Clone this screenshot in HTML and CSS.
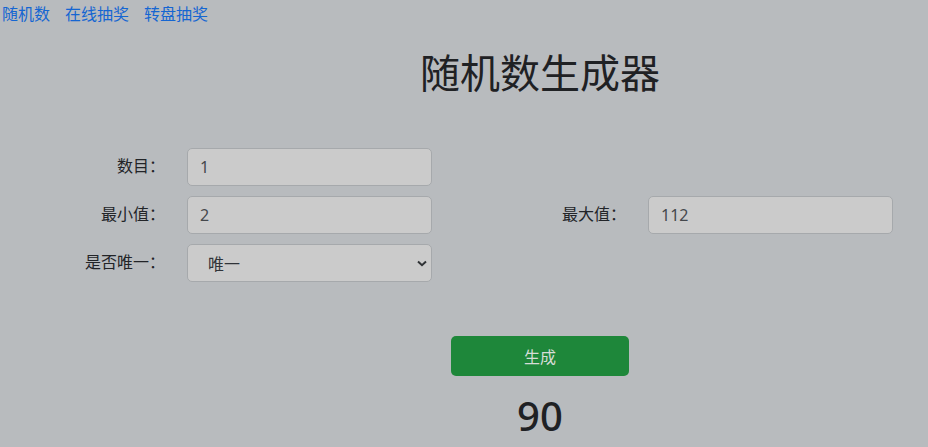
FILE: index.html
```html
<!DOCTYPE html>
<html lang="zh-CN">
<head>
<meta charset="utf-8">
<title>随机数生成器</title>
<link rel="stylesheet" href="styles.css">
</head>
<body>
<nav class="topnav">
  <a href="#">随机数</a>
  <a href="#">在线抽奖</a>
  <a href="#">转盘抽奖</a>
</nav>
<h1 class="title">随机数生成器</h1>
<form class="form-grid">
  <div class="field">
    <label class="field-label">数目：</label>
    <input class="field-input" type="text" value="1">
  </div>
  <div class="field empty"></div>
  <div class="field">
    <label class="field-label">最小值：</label>
    <input class="field-input" type="text" value="2">
  </div>
  <div class="field">
    <label class="field-label">最大值：</label>
    <input class="field-input" type="text" value="112">
  </div>
  <div class="field">
    <label class="field-label">是否唯一：</label>
    <select class="field-input field-select">
      <option>唯一</option>
      <option>不唯一</option>
    </select>
  </div>
</form>
<div class="actions">
  <button class="btn-generate" type="button">生成</button>
</div>
<div class="result">90</div>
</body>
</html>
```
FILE: styles.css
```css
html, body {
  margin: 0;
  padding: 0;
}
body {
  background: #b8bbbe;
  color: #212529;
  font-family: "Noto Sans", "Noto Sans CJK SC", sans-serif;
  font-size: 16px;
  width: 928px;
  height: 447px;
  overflow: hidden;
}
.topnav {
  display: flex;
  gap: 15px;
  padding-left: 2px;
  height: 27px;
  line-height: 27px;
}
.topnav a {
  color: #1566d2;
  text-decoration: none;
  font-family: "Noto Sans CJK SC", sans-serif;
}
.title {
  margin: 20px 0 0 152px;
  text-align: center;
  font-family: "Noto Sans CJK SC", sans-serif;
  font-size: 40px;
  font-weight: 400;
  line-height: 48px;
  color: #1f2124;
}
.form-grid {
  display: grid;
  grid-template-columns: 461px 461px;
  row-gap: 10px;
  margin-top: 53px;
}
.field {
  display: grid;
  grid-template-columns: 165px 245px;
  column-gap: 22px;
  align-items: center;
  height: 38px;
}
.field-label {
  text-align: right;
  font-family: "Noto Sans CJK SC", sans-serif;
  color: #222428;
  margin-top: -5px;
}
.field-input {
  box-sizing: border-box;
  width: 245px;
  height: 38px;
  margin: 0;
  padding: 0 12px;
  background: #cbcbcb;
  border: 1px solid #a6a9ac;
  border-radius: 5px;
  color: #45484c;
  font-family: "Noto Sans", "Noto Sans CJK SC", sans-serif;
  font-size: 16px;
  outline: none;
}
.field-select {
  appearance: none;
  -webkit-appearance: none;
  padding-left: 20px;
  background-image: url("data:image/svg+xml;utf8,<svg xmlns='http://www.w3.org/2000/svg' width='10' height='7' viewBox='0 0 10 7'><path d='M1 1.5 L5 5.2 L9 1.5' fill='none' stroke='%23303336' stroke-width='2'/></svg>");
  background-repeat: no-repeat;
  background-position: right 4px center;
  background-size: 10px 7px;
  font-family: "Noto Sans CJK SC", sans-serif;
  color: #303338;
}
.actions {
  display: flex;
  justify-content: center;
  margin: 54px 0 0 152px;
}
.btn-generate {
  width: 178px;
  height: 40px;
  border: none;
  border-radius: 5px;
  background: #1e873a;
  color: #d6ddd7;
  font-family: "Noto Sans CJK SC", sans-serif;
  font-size: 16px;
  padding: 0;
}
.result {
  margin: 16px 0 0 152px;
  text-align: center;
  font-family: "Noto Sans", sans-serif;
  font-size: 40px;
  font-weight: 500;
  line-height: 48px;
  color: #1f2124;
}
```
